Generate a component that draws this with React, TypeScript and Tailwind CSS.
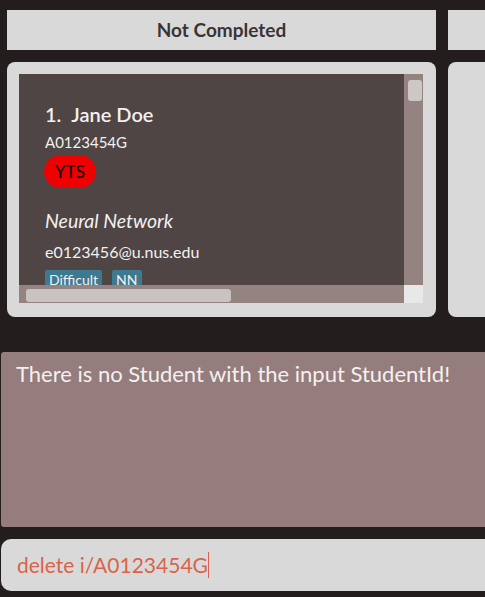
import React from "react";

export default function App() {
  const font = { fontFamily: '"Segoe UI", Lato, "Open Sans", sans-serif' };
  return (
    <div className="w-[485px] h-[597px] bg-[#231d1e] overflow-hidden flex flex-col" style={font}>
      <div className="flex gap-[12px] pl-[7px] pt-[10px]">
        <div className="w-[429px] h-[40px] shrink-0 bg-[#d9d9d9] flex items-center justify-center text-[19px] font-bold text-[#3a3434]">
          Not Completed
        </div>
        <div className="w-[60px] h-[40px] shrink-0 bg-[#d9d9d9]" />
      </div>
      <div className="flex gap-[12px] pl-[7px] pt-[12px]">
        <div className="w-[429px] h-[255px] shrink-0 bg-[#d9d9d9] rounded-[8px] p-[12px]">
          <div className="w-[404px] h-[229px] flex flex-col">
            <div className="flex h-[211px]">
              <div className="w-[385px] h-full bg-[#4e4544] overflow-hidden pl-[26px] pt-[28px] text-[#f4f0f0]">
                <div className="flex items-baseline text-[20px] font-semibold leading-[24px]">
                  <span>1.</span>
                  <span className="ml-[10px]">Jane Doe</span>
                </div>
                <div className="text-[15px] leading-[18px] mt-[7px]">A0123454G</div>
                <div className="mt-[4px] -ml-[1px] w-[52px] h-[33px] rounded-full bg-[#ee0000] text-black text-[17px] flex items-center justify-center">
                  YTS
                </div>
                <div className="italic text-[19.5px] leading-[24px] mt-[21px]">Neural Network</div>
                <div className="text-[16px] leading-[20px] mt-[9px]">e0123456@u.nus.edu</div>
                <div className="flex gap-[10px] mt-[8px]">
                  <span className="bg-[#3d7a8f] text-[14px] leading-[20px] px-[4px] rounded-[2px]">Difficult</span>
                  <span className="bg-[#3d7a8f] text-[14px] leading-[20px] px-[4px] rounded-[2px]">NN</span>
                </div>
              </div>
              <div className="w-[19px] h-full bg-[#948381] pt-[6px] pl-[4px]">
                <div className="w-[14px] h-[21px] rounded-[3px] bg-[#cdc7c6]" />
              </div>
            </div>
            <div className="flex h-[18px]">
              <div className="w-[385px] h-full bg-[#948381] pt-[4px] pl-[7px]">
                <div className="w-[205px] h-[13px] rounded-[3px] bg-[#c8c2c1]" />
              </div>
              <div className="w-[19px] h-full bg-[#e8e8e8]" />
            </div>
          </div>
        </div>
        <div className="w-[60px] h-[255px] shrink-0 bg-[#d9d9d9] rounded-[8px]" />
      </div>
      <div className="ml-[1px] mt-[35px] h-[175px] bg-[#947d7c] rounded-l-[3px] pl-[15px] pt-[8px] text-[22px] leading-[28px] text-[#f4f0f0]">
        There is no Student with the input StudentId!
      </div>
      <div className="ml-[1px] mt-[12px] h-[52px] bg-[#d9d9d9] rounded-l-[10px] flex items-center pl-[16px] text-[21px] text-[#d9634b]">
        <span>delete i/A0123454G</span>
        <span className="w-[1px] h-[26px] bg-[#d9634b]" />
      </div>
    </div>
  );
}
